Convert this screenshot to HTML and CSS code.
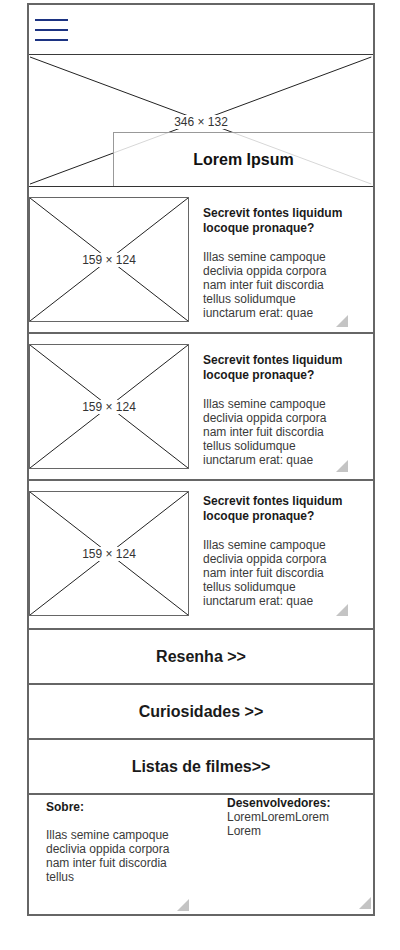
FILE: index.html
```html
<!DOCTYPE html>
<html lang="pt-BR">
  <head>
    <meta charset="UTF-8" />
    <meta name="viewport" content="width=device-width, initial-scale=1.0" />
    <title>Filmes - wireframe</title>
    <link rel="stylesheet" href="styles.css">
  </head>
  <body>
    <div class="frame">
      <header class="header">
        <div class="menu-icon">
          <span></span>
          <span></span>
          <span></span>
        </div>
      </header>

      <!-- Destaque -->
      <section class="hero">
        <svg class="cross" xmlns="http://www.w3.org/2000/svg">
          <line x1="1" y1="2" x2="99.5%" y2="98.5%" />
          <line x1="1" y1="98.5%" x2="99.5%" y2="2" />
        </svg>
        <span class="placeholder-label hero-label">346 × 132</span>
        <div class="hero-caption">Lorem Ipsum</div>
      </section>

      <!-- Lista de posts -->
      <article class="card">
        <div class="thumb">
          <svg class="cross" xmlns="http://www.w3.org/2000/svg">
            <line x1="0" y1="0" x2="100%" y2="100%" />
            <line x1="0" y1="100%" x2="100%" y2="0" />
          </svg>
          <span class="placeholder-label">159 × 124</span>
        </div>
        <div class="card-text">
          <h2>Secrevit fontes liquidum<br />locoque pronaque?</h2>
          <p>
            Illas semine campoque<br />declivia oppida corpora<br />nam inter
            fuit discordia<br />tellus solidumque<br />iunctarum erat: quae
          </p>
        </div>
        <span class="resize-corner"></span>
      </article>

      <article class="card">
        <div class="thumb">
          <svg class="cross" xmlns="http://www.w3.org/2000/svg">
            <line x1="0" y1="0" x2="100%" y2="100%" />
            <line x1="0" y1="100%" x2="100%" y2="0" />
          </svg>
          <span class="placeholder-label">159 × 124</span>
        </div>
        <div class="card-text">
          <h2>Secrevit fontes liquidum<br />locoque pronaque?</h2>
          <p>
            Illas semine campoque<br />declivia oppida corpora<br />nam inter
            fuit discordia<br />tellus solidumque<br />iunctarum erat: quae
          </p>
        </div>
        <span class="resize-corner"></span>
      </article>

      <article class="card">
        <div class="thumb">
          <svg class="cross" xmlns="http://www.w3.org/2000/svg">
            <line x1="0" y1="0" x2="100%" y2="100%" />
            <line x1="0" y1="100%" x2="100%" y2="0" />
          </svg>
          <span class="placeholder-label">159 × 124</span>
        </div>
        <div class="card-text">
          <h2>Secrevit fontes liquidum<br />locoque pronaque?</h2>
          <p>
            Illas semine campoque<br />declivia oppida corpora<br />nam inter
            fuit discordia<br />tellus solidumque<br />iunctarum erat: quae
          </p>
        </div>
        <span class="resize-corner"></span>
      </article>

      <!-- Navegacao -->
      <nav>
        <a class="nav-link" href="#">Resenha &gt;&gt;</a>
        <a class="nav-link" href="#">Curiosidades &gt;&gt;</a>
        <a class="nav-link" href="#">Listas de filmes&gt;&gt;</a>
      </nav>

      <footer class="footer">
        <div class="footer-col about">
          <h3>Sobre:</h3>
          <p>
            Illas semine campoque<br />declivia oppida corpora<br />nam inter
            fuit discordia<br />tellus
          </p>
          <span class="resize-corner"></span>
        </div>
        <div class="footer-col devs">
          <h3>Desenvolvedores:</h3>
          <p>LoremLoremLorem<br />Lorem</p>
          <span class="resize-corner"></span>
        </div>
      </footer>
    </div>
  </body>
</html>
```

FILE: styles.css
```css
:root {
  --frame-color: #666666;
  --line-color: #222222;
  --text-color: #1a1a1a;
  --text-soft: #3a3a3a;
  --menu-color: #1c3382;
  --corner-color: #c4c4c4;
}

body {
  margin: 0;
  font-family: "Liberation Sans", Arial, sans-serif;
  color: var(--text-color);
  background: #ffffff;
}

.frame {
  width: 344px;
  margin: 3px 0 0 27px;
  border: 2px solid var(--frame-color);
}

/* Cabecalho */
.header {
  height: 49px;
  border-bottom: 1px solid #3a3a3a;
  display: flex;
  align-items: center;
  padding-left: 6px;
}

.menu-icon {
  display: flex;
  flex-direction: column;
  gap: 8px;
  width: 33px;
}

.menu-icon span {
  display: block;
  height: 2px;
  background: var(--menu-color);
}

/* Placeholders de imagem */
.cross {
  grid-area: 1 / 1;
  width: 100%;
  height: 100%;
}

.cross line {
  stroke: var(--line-color);
  stroke-width: 1;
}

.placeholder-label {
  grid-area: 1 / 1;
  place-self: center;
  font-size: 12px;
  line-height: 14px;
  color: #333;
  background: #fff;
  padding: 0 2px;
}

.hero {
  height: 131px;
  border-bottom: 1px solid #333;
  display: grid;
}

.hero-label {
  margin-top: 2px;
}

.hero-caption {
  grid-area: 1 / 1;
  justify-self: end;
  align-self: end;
  width: 260px;
  height: 54px;
  border-top: 1px solid #999;
  border-left: 1px solid #999;
  background: rgba(255, 255, 255, 0.82);
  display: flex;
  align-items: center;
  justify-content: center;
  padding-top: 1px;
  box-sizing: border-box;
  font-size: 16px;
  font-weight: bold;
  color: #111;
}

/* Cards */
.card {
  position: relative;
  display: flex;
  padding: 10px 0 10px;
  border-bottom: 2px solid var(--frame-color);
}

.card:nth-of-type(2) .resize-corner {
  bottom: 7px;
}

.card:nth-of-type(3) {
  padding-bottom: 12px;
}

.card:nth-of-type(3) .card-text {
  margin-top: 3px;
}

.card:nth-of-type(3) .resize-corner {
  bottom: 12px;
}

.thumb {
  display: grid;
  box-sizing: border-box;
  width: 160px;
  height: 125px;
  border: 1px solid var(--frame-color);
}

.card-text {
  margin: 9px 0 0 14px;
}

.card-text h2 {
  margin: 0;
  font-size: 12px;
  line-height: 15px;
  font-weight: bold;
  color: var(--text-color);
}

.card-text p {
  margin: 14px 0 0;
  font-size: 12px;
  line-height: 14px;
  color: var(--text-soft);
}

.resize-corner {
  position: absolute;
  width: 12px;
  height: 12px;
  right: 25px;
  bottom: 5px;
  background: var(--corner-color);
  clip-path: polygon(100% 0, 100% 100%, 0 100%);
}

/* Navegacao */
.nav-link {
  display: flex;
  align-items: center;
  justify-content: center;
  height: 53px;
  border-bottom: 2px solid var(--frame-color);
  font-size: 16px;
  font-weight: bold;
  color: var(--text-color);
  text-decoration: none;
}

/* Rodape */
.footer {
  display: grid;
  grid-template-columns: 171px 1fr;
  height: 119px;
}

.footer-col {
  position: relative;
  font-size: 12px;
  line-height: 14px;
}

.footer-col h3 {
  margin: 0;
  font-size: 12px;
  line-height: 14px;
  font-weight: bold;
  color: var(--text-color);
}

.footer-col p {
  margin: 0;
  color: var(--text-soft);
}

.about {
  padding: 5px 0 0 17px;
}

.about p {
  margin-top: 14px;
}

.about .resize-corner {
  right: 11px;
  bottom: 3px;
}

.devs {
  padding: 1px 0 0 27px;
}

.devs .resize-corner {
  right: 2px;
  bottom: 5px;
}
```
